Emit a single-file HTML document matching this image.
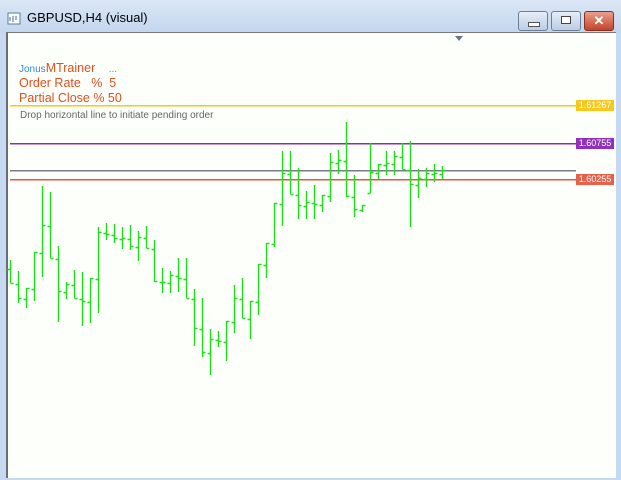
<!DOCTYPE html>
<html><head><style>
body{margin:0;width:621px;height:480px;overflow:hidden;background:#c6d9f0;font-family:"Liberation Sans",sans-serif;position:relative}
.title{position:absolute;left:0;top:0;width:621px;height:33px;background:linear-gradient(#dbe7f6,#c3d6ee)}
.t{position:absolute;left:27px;top:10px;font-size:13px;color:#000}
.btn{position:absolute;top:11px;height:18px;border:1px solid #6d7f98;border-radius:3px;background:linear-gradient(#e6eef8,#bccde3)}
.chart{position:absolute;left:6px;top:32px;width:608px;height:445px;background:#fdfffb;border-left:2px solid #6a6e72;border-top:1px solid #777}
.txt{position:absolute;font-size:12.5px;color:#e0501e}
.lbl{position:absolute;left:576px;width:38px;height:11px;font-size:9px;color:#fff;text-align:center;line-height:11px}
</style></head><body>
<div class="title">
<svg style="position:absolute;left:7px;top:11px" width="14" height="14"><rect x="1" y="2" width="12" height="11" fill="#fff" stroke="#5a7aa8"/><path d="M3 10v-4M6 11v-6M9 9v-4" stroke="#3a6ab0"/></svg>
<div class="t">GBPUSD,H4 (visual)</div>
<div class="btn" style="left:518px;width:28px"><div style="position:absolute;left:9px;top:10px;width:10px;height:3px;background:#fff;border:1px solid #555"></div></div>
<div class="btn" style="left:551px;width:28px"><div style="position:absolute;left:9px;top:4px;width:8px;height:6px;background:#fff;border:1px solid #444"></div></div>
<div class="btn" style="left:584px;width:28px;background:linear-gradient(#e8a08c,#c4432c);border-color:#8a3020;color:#fff;font-weight:bold;text-align:center;font-size:13px;line-height:18px">✕</div>
</div>
<div class="chart"></div>
<svg style="position:absolute;left:0;top:0" width="621" height="480">
<path d="M455 36h8l-4 5z" fill="#6b7680"/>
<rect x="10" y="105" width="566" height="1.5" fill="#f7c81a"/>
<rect x="10" y="143" width="566" height="1.5" fill="#8a2fb0"/>
<rect x="10" y="170" width="566" height="1.5" fill="#7a7a88"/>
<rect x="10" y="179" width="566" height="1.5" fill="#e05a40"/>
<g stroke="#1ee01a" stroke-width="1.4" fill="none" id="bars"></g>
</svg>
<div class="lbl" style="top:100px;background:#f8c81c">1.61267</div>
<div class="lbl" style="top:138px;background:#9030c0">1.60755</div>
<div class="lbl" style="top:174px;background:#e8604a">1.60255</div>
<div class="txt" style="left:19px;top:61px"><span style="color:#3a8ad0;font-size:10px">Jonus</span>MTrainer <span style="color:#3a8ad0;font-size:10px;margin-left:10px">...</span></div>
<div class="txt" style="left:19px;top:76px">Order Rate &nbsp;&nbsp;% &nbsp;5</div>
<div class="txt" style="left:19px;top:91px">Partial Close % 50</div>
<div class="txt" style="left:20px;top:110px;font-size:10px;color:#666">Drop horizontal line to initiate pending order</div>
<script>
var b=[[10,260,283],[18,271,303],[26,288,308],[34,252,301],[42,186,277],[50,192,258],[58,246,322],[66,282,299],[74,270,298],[82,272,326],[90,278,323],[98,227,313],[106,223,240],[114,224,243],[122,227,249],[130,225,250],[138,231,261],[146,226,248],[154,240,282],[162,268,293],[170,271,293],[178,258,292],[186,258,298],[194,289,346],[202,298,357],[210,329,375],[218,331,347],[226,321,361],[234,285,333],[242,278,318],[250,301,339],[258,264,315],[266,243,278],[274,203,247],[282,151,226],[290,151,194],[298,168,219],[306,191,219],[314,185,219],[322,195,212],[330,153,202],[338,150,174],[346,122,197],[354,175,217],[362,205,212],[370,143,193],[378,164,179],[386,151,175],[394,151,175],[402,143,169],[410,141,227],[418,169,198],[426,168,187],[434,164,182],[442,166,179]];
var s='',prev=null;
for(var i=0;i<b.length;i++){var x=b[i][0]+.5,t=b[i][1],bt=b[i][2];
var o=prev==null?t+(bt-t)*.4:Math.min(Math.max(prev,t),bt);
var c=i+1<b.length?Math.min(Math.max((b[i+1][1]+b[i+1][2])/2,t),bt):t+(bt-t)*.3;
o=Math.round(o)+.5;c=Math.round(c)+.5;prev=c;
s+='<path d="M'+x+' '+t+'V'+bt+'M'+(x-3)+' '+o+'H'+x+'M'+x+' '+c+'H'+(x+3)+'"/>';}
document.getElementById('bars').innerHTML=s;
</script>
</body></html>
